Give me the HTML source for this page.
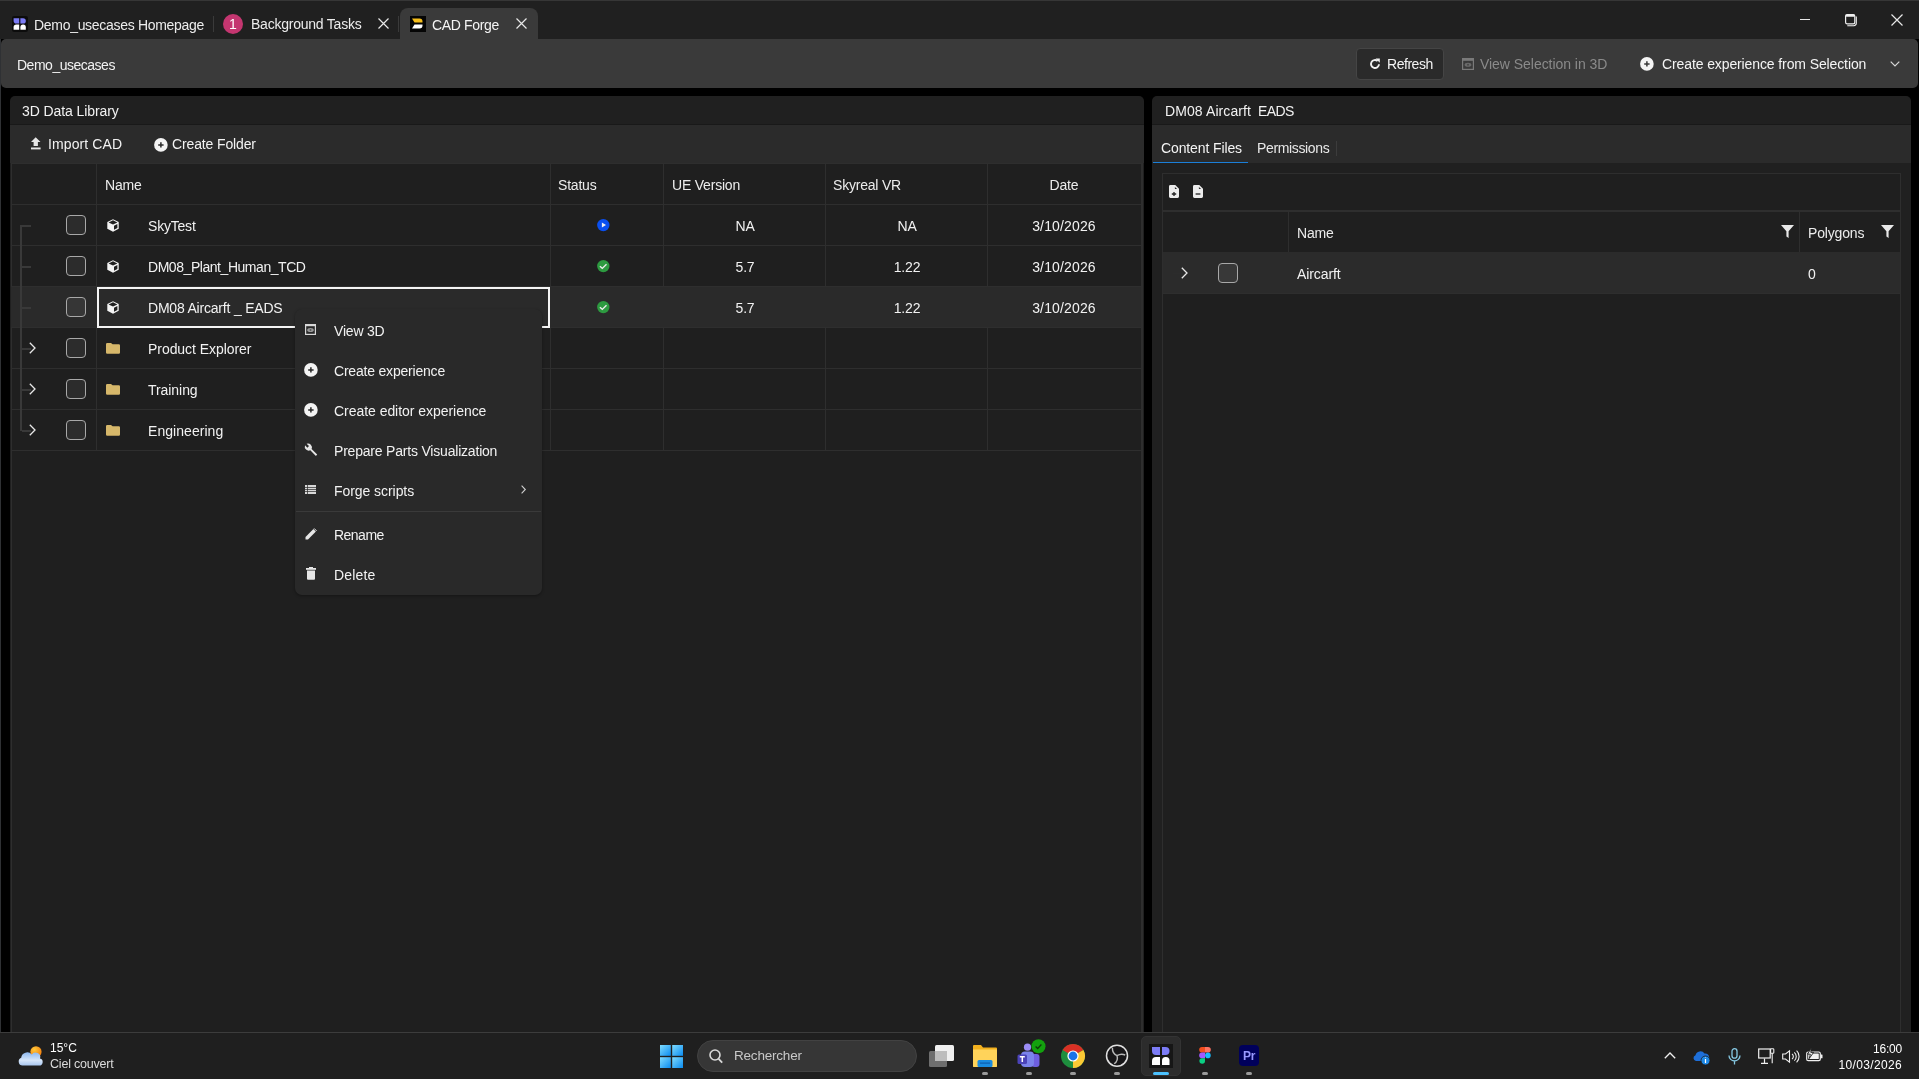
<!DOCTYPE html>
<html><head><meta charset="utf-8">
<style>
*{margin:0;padding:0;box-sizing:border-box}
html,body{width:1919px;height:1079px;overflow:hidden;background:#000}
body{position:relative;font-family:"Liberation Sans",sans-serif;font-size:14px;letter-spacing:-0.2px;color:#f2f2f2}
.a{position:absolute}
.t{position:absolute;line-height:16px;white-space:nowrap;will-change:transform}
svg{position:absolute;overflow:visible}
</style></head><body>

<!-- TITLE BAR -->
<div class="a" style="left:0;top:0;width:1919px;height:39px;background:#202020;border-top:1px solid #363636"></div>
<!-- tab 1 -->
<div class="a" style="left:12px;top:16px;width:16px;height:16px;background:#0c0c0c;border-radius:2px"></div>
<svg style="left:12px;top:16px" width="16" height="16" viewBox="0 0 16 16">
 <path d="M1.6 2.3h5.6v5.2H4.4A2.8 2.8 0 0 1 1.6 4.7z" fill="#7b7bf5"/>
 <path d="M8.4 2.3h2.8A2.6 2.6 0 0 1 13.8 4.9v0A2.6 2.6 0 0 1 11.2 7.5H8.4z" fill="#7b7bf5"/>
 <path d="M1.6 13.8V11.4A2.8 2.8 0 0 1 4.4 8.6H7.2V13.8z" fill="#fff"/>
 <path d="M8.4 13.8V11.2A2.6 2.6 0 0 1 11 8.6h0.2A2.6 2.6 0 0 1 13.8 11.2V13.8z" fill="#fff"/>
</svg>
<div class="t" style="left:34px;top:17px;color:#ececec;letter-spacing:-0.30px">Demo_usecases Homepage</div>
<div class="a" style="left:213px;top:16px;width:1px;height:16px;background:#3a3a3a"></div>
<!-- tab 2 -->
<div class="a" style="left:223px;top:14px;width:20px;height:20px;border-radius:50%;background:#c43670"></div>
<div class="t" style="left:223px;top:16px;width:20px;text-align:center;font-size:14px;color:#fff;letter-spacing:0">1</div>
<div class="t" style="left:251px;top:16px;color:#ececec;letter-spacing:-0.23px">Background Tasks</div>
<svg style="left:378px;top:18px" width="11" height="11" viewBox="0 0 11 11"><path d="M0.5 0.5L10.5 10.5M10.5 0.5L0.5 10.5" stroke="#e8e8e8" stroke-width="1.2"/></svg>
<div class="a" style="left:398px;top:16px;width:1px;height:16px;background:#3a3a3a"></div>
<!-- active tab -->
<div class="a" style="left:400px;top:8px;width:138px;height:32px;background:#3a3a3a;border-radius:8px 8px 0 0"></div>
<div class="a" style="left:410px;top:16px;width:16px;height:16px;background:#050505"></div>
<svg style="left:410px;top:16px" width="16" height="16" viewBox="0 0 16 16">
 <path d="M2 2.5h7.5a3 3 0 0 1 3 3v1H4.5z" fill="#f6be1a"/>
 <path d="M4.5 8.5h8v1a3 3 0 0 1 -3 3H2z" fill="#fff"/>
</svg>
<div class="t" style="left:432px;top:17px;color:#f4f4f4;letter-spacing:-0.34px">CAD Forge</div>
<svg style="left:516px;top:18px" width="11" height="11" viewBox="0 0 11 11"><path d="M0.5 0.5L10.5 10.5M10.5 0.5L0.5 10.5" stroke="#e8e8e8" stroke-width="1.2"/></svg>
<!-- window controls -->
<div class="a" style="left:1800px;top:19px;width:10px;height:1px;background:#e8e8e8"></div>
<svg style="left:1845px;top:14px" width="12" height="12" viewBox="0 0 12 12"><rect x="0.6" y="0.6" width="9.2" height="9.2" rx="1.6" fill="none" stroke="#f0f0f0" stroke-width="1.2"/><rect x="0.6" y="0.6" width="9.2" height="2.2" rx="1" fill="#f0f0f0"/><path d="M11.3 2.5v6.6a2.6 2.6 0 0 1 -2.6 2.6h-6.4" fill="none" stroke="#f0f0f0" stroke-width="1.1"/></svg>
<svg style="left:1891px;top:14px" width="12" height="12" viewBox="0 0 12 12"><path d="M0.5 0.5L11.5 11.5M11.5 0.5L0.5 11.5" stroke="#e8e8e8" stroke-width="1.2"/></svg>

<!-- TOOLBAR -->
<div class="a" style="left:0;top:39px;width:1px;height:993px;background:#2f3134"></div>
<div class="a" style="left:1px;top:39px;width:1917px;height:49px;background:#3a3a3a;border-radius:5px"></div>
<div class="t" style="left:17px;top:57px;color:#f2f2f2;letter-spacing:-0.49px">Demo_usecases</div>

<!-- toolbar right -->
<div class="a" style="left:1356px;top:48px;width:88px;height:32px;background:#2a2a2a;border:1px solid #454545;border-radius:4px"></div>
<svg style="left:1369px;top:58px" width="12" height="12" viewBox="0 0 12 12"><path d="M10 6.2A4 4 0 1 1 8.6 3" fill="none" stroke="#f0f0f0" stroke-width="1.9"/><path d="M6.6 0.6h4.2v4.2z" fill="#f0f0f0"/></svg>
<div class="t" style="left:1387px;top:56px;color:#f4f4f4;letter-spacing:-0.47px">Refresh</div>
<svg style="left:1462px;top:58px" width="12" height="12" viewBox="0 0 12 12"><rect x="0.6" y="0.6" width="10.8" height="10.8" fill="none" stroke="#7a7a7a" stroke-width="1.2"/><rect x="0.6" y="0.6" width="10.8" height="2.2" fill="#7a7a7a"/><ellipse cx="6" cy="6.8" rx="3.4" ry="2" fill="#6a6a6a"/><circle cx="6" cy="6.8" r="1" fill="#484848"/></svg>
<div class="t" style="left:1480px;top:56px;color:#8a8a8a;letter-spacing:-0.04px">View Selection in 3D</div>
<svg style="left:1640px;top:56.5px" width="14" height="14" viewBox="0 0 14 14"><circle cx="6.9" cy="6.9" r="6.8" fill="#f4f4f4"/><path d="M6.9 4.2v5.4M4.2 6.9h5.4" stroke="#383838" stroke-width="1.5"/></svg>
<div class="t" style="left:1662px;top:56px;color:#f4f4f4;letter-spacing:-0.11px">Create experience from Selection</div>
<svg style="left:1890px;top:61px" width="10" height="6" viewBox="0 0 10 6"><path d="M0.7 0.7L5 5L9.3 0.7" fill="none" stroke="#d8d8d8" stroke-width="1.2"/></svg>

<!-- LEFT PANEL -->
<div class="a" style="left:10px;top:96px;width:1134px;height:936px;background:#202020;border-radius:5px 5px 0 0"></div>
<div class="t" style="left:22px;top:103px;letter-spacing:-0.09px">3D Data Library</div>
<div class="a" style="left:10px;top:124px;width:1134px;height:1px;background:#191919"></div><div class="a" style="left:10px;top:125px;width:1134px;height:38px;background:#2b2b2b"></div>

<!-- left toolbar -->
<svg style="left:31px;top:137px" width="10" height="13" viewBox="0 0 10 13"><path d="M4.7 0.3L9.5 5H6.9V9H2.6V5H0z" fill="#e6e6e6"/><rect x="0" y="10.5" width="9.6" height="1.9" fill="#e6e6e6"/></svg>
<div class="t" style="left:48px;top:136px;letter-spacing:0.11px">Import CAD</div>
<svg style="left:154px;top:138px" width="14" height="14" viewBox="0 0 14 14"><circle cx="6.9" cy="6.9" r="6.8" fill="#f4f4f4"/><path d="M6.9 4.2v5.4M4.2 6.9h5.4" stroke="#2b2b2b" stroke-width="1.5"/></svg>
<div class="t" style="left:172px;top:136px;letter-spacing:-0.13px">Create Folder</div>
<!-- TABLE -->
<div class="a" style="left:11px;top:163px;width:1130px;height:869px;background:#1f1f1f;border-left:1px solid #2e2e2e;border-top:1px solid #2e2e2e"></div>
<div class="a" style="left:11px;top:204px;width:1130px;height:1px;background:#2e2e2e"></div>
<div class="a" style="left:11px;top:245px;width:1130px;height:1px;background:#2e2e2e"></div>
<div class="a" style="left:11px;top:286px;width:1130px;height:1px;background:#2e2e2e"></div>
<div class="a" style="left:11px;top:327px;width:1130px;height:1px;background:#2e2e2e"></div>
<div class="a" style="left:11px;top:368px;width:1130px;height:1px;background:#2e2e2e"></div>
<div class="a" style="left:11px;top:409px;width:1130px;height:1px;background:#2e2e2e"></div>
<div class="a" style="left:11px;top:450px;width:1130px;height:1px;background:#2e2e2e"></div>
<div class="a" style="left:96px;top:163px;width:1px;height:288px;background:#2e2e2e"></div>
<div class="a" style="left:550px;top:163px;width:1px;height:288px;background:#2e2e2e"></div>
<div class="a" style="left:663px;top:163px;width:1px;height:288px;background:#2e2e2e"></div>
<div class="a" style="left:825px;top:163px;width:1px;height:288px;background:#2e2e2e"></div>
<div class="a" style="left:987px;top:163px;width:1px;height:288px;background:#2e2e2e"></div>
<div class="a" style="left:1141px;top:163px;width:2px;height:869px;background:#2e2e2e"></div>
<div class="a" style="left:11px;top:287px;width:1130px;height:40px;background:#2a2a2a"></div>
<div class="t" style="left:105px;top:177px;color:#ececec">Name</div>
<div class="t" style="left:558px;top:177px;color:#ececec">Status</div>
<div class="t" style="left:672px;top:177px;color:#ececec">UE Version</div>
<div class="t" style="left:833px;top:177px;color:#ececec">Skyreal VR</div>
<div class="t" style="left:987px;top:177px;width:154px;text-align:center;color:#ececec">Date</div>
<div class="a" style="left:20px;top:225px;width:2px;height:206px;background:#393939"></div>
<div class="a" style="left:22px;top:225px;width:9px;height:2px;background:#393939"></div>
<div class="a" style="left:66px;top:215px;width:20px;height:20px;border:1px solid #a8a8a8;border-radius:4px;background:#2c2c2c"></div>
<svg style="left:107px;top:219px" width="12" height="13" viewBox="0 0 12 13"><path d="M6 0.3L11.7 3.1V9.7L6 12.7L0.3 9.7V3.1z" fill="#f4f4f4"/><path d="M1.6 3.4L6 1.3L10.4 3.4L6 5.5z" fill="#1f1f1f"/><path d="M7 6.7L10.4 5V9L7 10.8z" fill="#1f1f1f"/></svg>
<div class="t" style="left:148px;top:218px">SkyTest</div>
<svg style="left:597px;top:219px" width="13" height="13" viewBox="0 0 13 13"><circle cx="6.3" cy="6.1" r="6.2" fill="#0a4ff0"/><path d="M4.9 3.6L9 6.1L4.9 8.6z" fill="#f0f0f0"/></svg>
<div class="t" style="left:664px;top:218px;width:162px;text-align:center">NA</div>
<div class="t" style="left:826px;top:218px;width:162px;text-align:center">NA</div>
<div class="t" style="left:987px;top:218px;width:154px;text-align:center;letter-spacing:0.15px">3/10/2026</div>
<div class="a" style="left:22px;top:266px;width:9px;height:2px;background:#393939"></div>
<div class="a" style="left:66px;top:256px;width:20px;height:20px;border:1px solid #a8a8a8;border-radius:4px;background:#2c2c2c"></div>
<svg style="left:107px;top:260px" width="12" height="13" viewBox="0 0 12 13"><path d="M6 0.3L11.7 3.1V9.7L6 12.7L0.3 9.7V3.1z" fill="#f4f4f4"/><path d="M1.6 3.4L6 1.3L10.4 3.4L6 5.5z" fill="#1f1f1f"/><path d="M7 6.7L10.4 5V9L7 10.8z" fill="#1f1f1f"/></svg>
<div class="t" style="left:148px;top:259px;letter-spacing:-0.45px">DM08_Plant_Human_TCD</div>
<svg style="left:597px;top:260px" width="13" height="13" viewBox="0 0 13 13"><circle cx="6.3" cy="6.1" r="6.2" fill="#2d9a40"/><path d="M2.9 6.3L5.3 8.4L9.5 4.3" fill="none" stroke="#ececec" stroke-width="1.4"/></svg>
<div class="t" style="left:664px;top:259px;width:162px;text-align:center">5.7</div>
<div class="t" style="left:826px;top:259px;width:162px;text-align:center">1.22</div>
<div class="t" style="left:987px;top:259px;width:154px;text-align:center;letter-spacing:0.15px">3/10/2026</div>
<div class="a" style="left:22px;top:307px;width:9px;height:2px;background:#393939"></div>
<div class="a" style="left:66px;top:297px;width:20px;height:20px;border:1px solid #a8a8a8;border-radius:4px;background:#363636"></div>
<svg style="left:107px;top:301px" width="12" height="13" viewBox="0 0 12 13"><path d="M6 0.3L11.7 3.1V9.7L6 12.7L0.3 9.7V3.1z" fill="#f4f4f4"/><path d="M1.6 3.4L6 1.3L10.4 3.4L6 5.5z" fill="#1f1f1f"/><path d="M7 6.7L10.4 5V9L7 10.8z" fill="#1f1f1f"/></svg>
<div class="t" style="left:148px;top:300px">DM08 Aircarft _ EADS</div>
<svg style="left:597px;top:301px" width="13" height="13" viewBox="0 0 13 13"><circle cx="6.3" cy="6.1" r="6.2" fill="#2d9a40"/><path d="M2.9 6.3L5.3 8.4L9.5 4.3" fill="none" stroke="#ececec" stroke-width="1.4"/></svg>
<div class="t" style="left:664px;top:300px;width:162px;text-align:center">5.7</div>
<div class="t" style="left:826px;top:300px;width:162px;text-align:center">1.22</div>
<div class="t" style="left:987px;top:300px;width:154px;text-align:center;letter-spacing:0.15px">3/10/2026</div>
<div class="a" style="left:22px;top:348px;width:9px;height:2px;background:#393939"></div>
<svg style="left:29px;top:342px" width="7" height="12" viewBox="0 0 7 12"><path d="M0.8 0.8L6 6L0.8 11.2" fill="none" stroke="#e8e8e8" stroke-width="1.3"/></svg>
<div class="a" style="left:66px;top:338px;width:20px;height:20px;border:1px solid #a8a8a8;border-radius:4px;background:#2c2c2c"></div>
<svg style="left:106px;top:343px" width="14" height="11" viewBox="0 0 14 11"><path d="M0 1.2A1.2 1.2 0 0 1 1.2 0H5L6.6 1.2H12.8A1.2 1.2 0 0 1 14 2.4V9.6A1.2 1.2 0 0 1 12.8 10.8H1.2A1.2 1.2 0 0 1 0 9.6z" fill="#d6b76a"/></svg>
<div class="t" style="left:148px;top:341px;letter-spacing:-0.05px">Product Explorer</div>
<div class="a" style="left:22px;top:389px;width:9px;height:2px;background:#393939"></div>
<svg style="left:29px;top:383px" width="7" height="12" viewBox="0 0 7 12"><path d="M0.8 0.8L6 6L0.8 11.2" fill="none" stroke="#e8e8e8" stroke-width="1.3"/></svg>
<div class="a" style="left:66px;top:379px;width:20px;height:20px;border:1px solid #a8a8a8;border-radius:4px;background:#2c2c2c"></div>
<svg style="left:106px;top:384px" width="14" height="11" viewBox="0 0 14 11"><path d="M0 1.2A1.2 1.2 0 0 1 1.2 0H5L6.6 1.2H12.8A1.2 1.2 0 0 1 14 2.4V9.6A1.2 1.2 0 0 1 12.8 10.8H1.2A1.2 1.2 0 0 1 0 9.6z" fill="#d6b76a"/></svg>
<div class="t" style="left:148px;top:382px;letter-spacing:-0.06px">Training</div>
<div class="a" style="left:22px;top:430px;width:9px;height:2px;background:#393939"></div>
<svg style="left:29px;top:424px" width="7" height="12" viewBox="0 0 7 12"><path d="M0.8 0.8L6 6L0.8 11.2" fill="none" stroke="#e8e8e8" stroke-width="1.3"/></svg>
<div class="a" style="left:66px;top:420px;width:20px;height:20px;border:1px solid #a8a8a8;border-radius:4px;background:#2c2c2c"></div>
<svg style="left:106px;top:425px" width="14" height="11" viewBox="0 0 14 11"><path d="M0 1.2A1.2 1.2 0 0 1 1.2 0H5L6.6 1.2H12.8A1.2 1.2 0 0 1 14 2.4V9.6A1.2 1.2 0 0 1 12.8 10.8H1.2A1.2 1.2 0 0 1 0 9.6z" fill="#d6b76a"/></svg>
<div class="t" style="left:148px;top:423px;letter-spacing:0.05px">Engineering</div>
<div class="a" style="left:97px;top:287px;width:453px;height:41px;border:2px solid #f4f4f4"></div>

<!-- CONTEXT MENU -->
<div class="a" style="left:295px;top:309px;width:247px;height:286px;background:#292929;border-radius:7px;box-shadow:0 1px 3px rgba(0,0,0,0.35)"></div>
<svg style="left:305px;top:324px" width="11" height="11" viewBox="0 0 11 11"><rect x="0.6" y="0.6" width="9.8" height="9.8" fill="none" stroke="#d8d8d8" stroke-width="1.2"/><rect x="0.6" y="0.6" width="9.8" height="1.6" fill="#d8d8d8"/><ellipse cx="5.5" cy="6" rx="3.3" ry="2" fill="#9a9a9a"/><circle cx="5.5" cy="6" r="1" fill="#5a5a5a"/></svg>
<div class="t" style="left:334px;top:323px">View 3D</div>
<svg style="left:304px;top:363px" width="14" height="14" viewBox="0 0 14 14"><circle cx="6.9" cy="6.9" r="6.8" fill="#f4f4f4"/><path d="M6.9 4.2v5.4M4.2 6.9h5.4" stroke="#282828" stroke-width="1.5"/></svg>
<div class="t" style="left:334px;top:363px">Create experience</div>
<svg style="left:304px;top:403px" width="14" height="14" viewBox="0 0 14 14"><circle cx="6.9" cy="6.9" r="6.8" fill="#f4f4f4"/><path d="M6.9 4.2v5.4M4.2 6.9h5.4" stroke="#282828" stroke-width="1.5"/></svg>
<div class="t" style="left:334px;top:403px;letter-spacing:-0.04px">Create editor experience</div>
<svg style="left:304px;top:443px" width="14" height="14" viewBox="0 0 14 14"><path d="M13.2 11.6L7.6 6A4 4 0 0 0 2.6 0.7L5 3.1L3.4 4.7L1 2.3A4 4 0 0 0 6.3 7.3L11.9 12.9z" fill="#e6e6e6"/></svg>
<div class="t" style="left:334px;top:443px">Prepare Parts Visualization</div>
<svg style="left:305px;top:485px" width="11" height="9" viewBox="0 0 11 9"><rect x="0" y="0" width="11" height="9" fill="#d8d8d8"/><path d="M0 2.5H11M0 4.5H11M0 6.5H11M2.5 0V9" stroke="#282828" stroke-width="0.7"/></svg>
<div class="t" style="left:334px;top:483px;letter-spacing:-0.06px">Forge scripts</div>
<svg style="left:521px;top:485px" width="5" height="9" viewBox="0 0 5 9"><path d="M0.6 0.6L4.3 4.5L0.6 8.4" fill="none" stroke="#cfcfcf" stroke-width="1.1"/></svg>
<div class="a" style="left:296px;top:511px;width:245px;height:1px;background:#3a3a3a"></div>
<svg style="left:305px;top:528px" width="12" height="12" viewBox="0 0 12 12"><path d="M0.5 11.5V9L8.4 1.1L10.9 3.6L3 11.5z" fill="#e6e6e6"/><path d="M9.1 0.4L11.6 2.9" stroke="#e6e6e6" stroke-width="1"/></svg>
<div class="t" style="left:334px;top:527px;letter-spacing:-0.52px">Rename</div>
<svg style="left:306px;top:567px" width="10" height="13" viewBox="0 0 10 13"><rect x="0" y="1" width="10" height="1.8" fill="#e6e6e6"/><rect x="3" y="0" width="4" height="1.5" fill="#e6e6e6"/><path d="M1 3.6H9V11.8A1 1 0 0 1 8 12.8H2A1 1 0 0 1 1 11.8z" fill="#e6e6e6"/></svg>
<div class="t" style="left:334px;top:567px;letter-spacing:0.18px">Delete</div>

<!-- RIGHT PANEL -->
<div class="a" style="left:1152px;top:96px;width:759px;height:936px;background:#202020;border-radius:5px 5px 0 0"></div>
<div class="t" style="left:1165px;top:103px;letter-spacing:0.1px">DM08 Aircarft</div><div class="t" style="left:1258px;top:103px;letter-spacing:-0.6px">EADS</div>
<div class="a" style="left:1152px;top:124px;width:759px;height:1px;background:#191919"></div><div class="a" style="left:1152px;top:125px;width:759px;height:38px;background:#2b2b2b"></div>

<!-- right tabs -->
<div class="t" style="left:1161px;top:140px;color:#f4f4f4;letter-spacing:-0.12px">Content Files</div>
<div class="a" style="left:1153px;top:162px;width:95px;height:2px;background:#1b7fd8"></div>
<div class="t" style="left:1257px;top:140px;color:#e8e8e8;letter-spacing:-0.35px">Permissions</div>
<div class="a" style="left:1336px;top:141px;width:1px;height:15px;background:#3c3c3c"></div>
<div class="a" style="left:1152px;top:163px;width:759px;height:869px;background:#202020"></div>
<!-- inner box -->
<div class="a" style="left:1162px;top:173px;width:739px;height:859px;background:#1f1f1f;border:1px solid #2e2e2e;border-bottom:none"></div>
<div class="a" style="left:1163px;top:210px;width:737px;height:2px;background:#2e2e2e"></div>
<svg style="left:1169px;top:185px" width="10" height="13" viewBox="0 0 10 13"><path d="M1.4 0H6.3L10 3.7V11.6A1.4 1.4 0 0 1 8.6 13H1.4A1.4 1.4 0 0 1 0 11.6V1.4A1.4 1.4 0 0 1 1.4 0z" fill="#ececec"/><path d="M5.9 1.9L8.1 4.1H6.6A0.7 0.7 0 0 1 5.9 3.4z" fill="#2a2a2a"/><path d="M5 6.9V11.1M2.8 9H7.2" stroke="#1f1f1f" stroke-width="1.3"/></svg>
<svg style="left:1193px;top:185px" width="10" height="13" viewBox="0 0 10 13"><path d="M1.4 0H6.3L10 3.7V11.6A1.4 1.4 0 0 1 8.6 13H1.4A1.4 1.4 0 0 1 0 11.6V1.4A1.4 1.4 0 0 1 1.4 0z" fill="#ececec"/><path d="M5.9 1.9L8.1 4.1H6.6A0.7 0.7 0 0 1 5.9 3.4z" fill="#2a2a2a"/><path d="M2.6 9H7.4" stroke="#1f1f1f" stroke-width="1.3"/></svg>
<!-- right table header -->
<div class="a" style="left:1288px;top:212px;width:1px;height:40px;background:#2e2e2e"></div>
<div class="a" style="left:1799px;top:212px;width:1px;height:40px;background:#2e2e2e"></div>
<div class="a" style="left:1163px;top:252px;width:737px;height:41px;background:#2b2b2b"></div>
<div class="a" style="left:1163px;top:293px;width:737px;height:1px;background:#2e2e2e"></div>
<div class="t" style="left:1297px;top:225px;color:#ececec">Name</div>
<div class="t" style="left:1808px;top:225px;color:#ececec;letter-spacing:-0.17px">Polygons</div>
<svg style="left:1781px;top:225px" width="13" height="13" viewBox="0 0 13 13"><path d="M0 0H13L7.6 6.2V13L5.4 11.4V6.2z" fill="#e8e8e8"/></svg>
<svg style="left:1881px;top:225px" width="13" height="13" viewBox="0 0 13 13"><path d="M0 0H13L7.6 6.2V13L5.4 11.4V6.2z" fill="#e8e8e8"/></svg>
<div class="a" style="left:1173px;top:273px;width:8px;height:1px;background:#2c2c2c"></div>
<svg style="left:1181px;top:267px" width="7" height="12" viewBox="0 0 7 12"><path d="M0.8 0.8L6 6L0.8 11.2" fill="none" stroke="#e8e8e8" stroke-width="1.3"/></svg>
<div class="a" style="left:1218px;top:263px;width:20px;height:20px;border:1px solid #a8a8a8;border-radius:4px;background:#383838"></div>
<div class="t" style="left:1297px;top:266px;letter-spacing:-0.1px">Aircarft</div>
<div class="t" style="left:1808px;top:266px">0</div>

<!-- TASKBAR -->
<div class="a" style="left:0;top:1032px;width:1919px;height:47px;background:#1f1f1f;border-top:1px solid #3c3c3c"></div>

<!-- weather -->
<svg style="left:18px;top:1045px" width="26" height="22" viewBox="0 0 26 22">
 <defs><linearGradient id="cl" x1="0" y1="0" x2="0" y2="1"><stop offset="0" stop-color="#8db8f0"/><stop offset="0.6" stop-color="#d6e6fa"/><stop offset="1" stop-color="#a9c6ee"/></linearGradient>
 <radialGradient id="sn" cx="0.35" cy="0.3" r="0.8"><stop offset="0" stop-color="#ffc83a"/><stop offset="1" stop-color="#f27a0c"/></radialGradient></defs>
 <circle cx="18" cy="6.8" r="5.6" fill="url(#sn)"/>
 <path d="M4.5 20.5A4 4 0 0 1 3.2 12.8A6 6 0 0 1 13.8 9.6A4.6 4.6 0 0 1 22 13.6A3.5 3.5 0 0 1 21.2 20.5z" fill="url(#cl)"/>
</svg>
<div class="t" style="left:50px;top:1041px;font-size:12px;line-height:14px;color:#fff;letter-spacing:0px">15°C</div>
<div class="t" style="left:50px;top:1057px;font-size:12.5px;line-height:14px;color:#dcdcdc">Ciel couvert</div>
<!-- start -->
<svg style="left:660px;top:1045px" width="23" height="23" viewBox="0 0 23 23">
 <defs><linearGradient id="wn" x1="0" y1="0" x2="1" y2="1"><stop offset="0" stop-color="#7fdcff"/><stop offset="1" stop-color="#0a8bf0"/></linearGradient></defs>
 <rect x="0" y="0" width="10.8" height="10.8" fill="url(#wn)"/><rect x="12.2" y="0" width="10.8" height="10.8" fill="url(#wn)"/>
 <rect x="0" y="12.2" width="10.8" height="10.8" fill="url(#wn)"/><rect x="12.2" y="12.2" width="10.8" height="10.8" fill="url(#wn)"/>
</svg>
<!-- search -->
<div class="a" style="left:697px;top:1040px;width:220px;height:32px;border-radius:16px;background:#363636;border:1px solid #424242"></div>
<svg style="left:709px;top:1049px" width="14" height="15" viewBox="0 0 14 15"><circle cx="6" cy="6" r="5" fill="none" stroke="#d8d8d8" stroke-width="1.6"/><path d="M9.6 9.8L13.2 13.6" stroke="#d8d8d8" stroke-width="1.8"/></svg>
<div class="t" style="left:734px;top:1048px;font-size:13.5px;color:#c8c8c8">Rechercher</div>
<!-- task view -->
<svg style="left:929px;top:1045px" width="25" height="22" viewBox="0 0 25 22"><rect x="0" y="6" width="18" height="16" rx="1.5" fill="#6e6e6e"/><rect x="6" y="0" width="19" height="16" rx="1.5" fill="#f0f0f0"/><rect x="6" y="6" width="12" height="10" fill="#bdbdbd"/></svg>
<!-- explorer -->
<svg style="left:973px;top:1045px" width="24" height="22" viewBox="0 0 24 22"><path d="M0 1A1 1 0 0 1 1 0H8L10 2.5H23A1 1 0 0 1 24 3.5V21A1 1 0 0 1 23 22H1A1 1 0 0 1 0 21z" fill="#f2b01e"/><path d="M0 4.5H24V21A1 1 0 0 1 23 22H1A1 1 0 0 1 0 21z" fill="#ffd35a"/><rect x="4.5" y="15" width="15" height="7" rx="1.5" fill="#1a8be0"/><rect x="7" y="17.5" width="10" height="1.2" fill="#0d5fae"/></svg>
<div class="a" style="left:982px;top:1072px;width:6px;height:3px;border-radius:2px;background:#9a9a9a"></div>
<!-- teams -->
<svg style="left:1017px;top:1039px" width="30" height="29" viewBox="0 0 30 29">
 <circle cx="10.5" cy="8.2" r="3.6" fill="#9b8cf5"/>
 <rect x="14.5" y="15" width="8" height="13" rx="3" fill="#6f5fe0"/>
 <rect x="4" y="12.5" width="13" height="15.5" rx="4" fill="#7b83eb"/>
 <rect x="0.5" y="15.5" width="9.5" height="9.5" rx="1.5" fill="#4b43b8"/>
 <path d="M2.8 17.8H7.8M5.3 17.8V23" stroke="#fff" stroke-width="1.5"/>
 <circle cx="21.5" cy="7.2" r="7" fill="#13a10e"/>
 <path d="M18.6 7.5L20.7 9.5L24.4 5.5" fill="none" stroke="#0b3d08" stroke-width="1.3"/>
</svg>
<div class="a" style="left:1026px;top:1072px;width:6px;height:3px;border-radius:2px;background:#9a9a9a"></div>
<!-- chrome -->
<svg style="left:1061px;top:1044px" width="24" height="24" viewBox="0 0 24 24">
 <circle cx="12" cy="12" r="12" fill="#1e8e3e"/>
 <path d="M12 12L1.6 6A12 12 0 0 1 22.4 6z" fill="#d93025"/>
 <path d="M12 12L22.4 6A12 12 0 0 1 12 24z" fill="#fcc934"/>
 <circle cx="12" cy="12" r="5.6" fill="#fff"/><circle cx="12" cy="12" r="4.4" fill="#1a73e8"/>
</svg>
<div class="a" style="left:1070px;top:1072px;width:6px;height:3px;border-radius:2px;background:#9a9a9a"></div>
<!-- obs -->
<svg style="left:1105px;top:1044px" width="24" height="24" viewBox="0 0 24 24">
 <circle cx="12" cy="11.7" r="10.5" fill="#171618" stroke="#e0e0e0" stroke-width="1.5"/>
 <path d="M7.4 3.8Q7.2 9.6 12 11.7" fill="none" stroke="#b8b8b8" stroke-width="1.4"/>
 <path d="M12 11.7Q13.6 16.6 9.2 19.8" fill="none" stroke="#b8b8b8" stroke-width="1.4"/>
 <path d="M12 11.7Q16 9.2 20.2 11" fill="none" stroke="#b8b8b8" stroke-width="1.4"/>
</svg>
<div class="a" style="left:1114px;top:1072px;width:6px;height:3px;border-radius:2px;background:#9a9a9a"></div>
<!-- active -->
<div class="a" style="left:1141px;top:1036px;width:40px;height:40px;border-radius:5px;background:#2c2c2c;border:1px solid #333"></div>
<div class="a" style="left:1149px;top:1044px;width:24px;height:24px;background:#161616"></div>
<svg style="left:1149px;top:1044px" width="24" height="24" viewBox="0 0 24 24">
 <path d="M3 3h8v8H7A4 4 0 0 1 3 7z" fill="#7b7bf5"/>
 <path d="M13 3h3.5A4 4 0 0 1 20.5 7v0A4 4 0 0 1 16.5 11H13z" fill="#7b7bf5"/>
 <path d="M3 21V17A4 4 0 0 1 7 13H11V21z" fill="#fff"/>
 <path d="M13 21V16.5A3.5 3.5 0 0 1 16.5 13h0.5A3.5 3.5 0 0 1 20.5 16.5V21z" fill="#fff"/>
</svg>
<div class="a" style="left:1153px;top:1072px;width:16px;height:3px;border-radius:2px;background:#4cc2ff"></div>
<!-- figma -->
<svg style="left:1199px;top:1047px" width="12" height="17" viewBox="0 0 12 17">
 <path d="M3 0H6V5.6H3A2.8 2.8 0 0 1 3 0z" fill="#f24e1e"/>
 <path d="M6 0H9A2.8 2.8 0 0 1 9 5.6H6z" fill="#ff7262"/>
 <path d="M3 5.6H6V11.2H3A2.8 2.8 0 0 1 3 5.6z" fill="#a259ff"/>
 <circle cx="8.9" cy="8.4" r="2.8" fill="#1abcfe"/>
 <path d="M3 11.2H6V14A2.8 2.8 0 1 1 3 11.2z" fill="#0acf83"/>
</svg>
<div class="a" style="left:1202px;top:1072px;width:6px;height:3px;border-radius:2px;background:#9a9a9a"></div>
<!-- premiere -->
<div class="a" style="left:1239px;top:1045px;width:20px;height:21px;border-radius:4px;background:#00005b"></div>
<div class="t" style="left:1239px;top:1048px;width:20px;text-align:center;font-size:12px;font-weight:bold;color:#9999ff;letter-spacing:-0.3px">Pr</div>
<div class="a" style="left:1246px;top:1072px;width:6px;height:3px;border-radius:2px;background:#9a9a9a"></div>
<!-- tray -->
<svg style="left:1664px;top:1052px" width="12" height="7" viewBox="0 0 12 7"><path d="M0.8 6.2L6 1L11.2 6.2" fill="none" stroke="#f0f0f0" stroke-width="1.3"/></svg>
<svg style="left:1693px;top:1048px" width="19" height="18" viewBox="0 0 19 18"><path d="M3 13A3 3 0 0 1 2.5 7.2A5 5 0 0 1 11.5 5.5A3.8 3.8 0 0 1 16 10A2.8 2.8 0 0 1 15 13z" fill="#1e6fd9"/><circle cx="12.5" cy="12.5" r="4.5" fill="#1e88e5" stroke="#1c1c1c" stroke-width="0.8"/><path d="M12.5 11V15M12.5 9.5V10" stroke="#fff" stroke-width="1.2"/></svg>
<svg style="left:1728px;top:1048px" width="13" height="17" viewBox="0 0 13 17"><rect x="4" y="0.7" width="5" height="9.5" rx="2.5" fill="none" stroke="#86c9e3" stroke-width="1.3"/><path d="M1 7.5A5.5 5.5 0 0 0 12 7.5M6.5 13V16.5" fill="none" stroke="#86c9e3" stroke-width="1.3"/></svg>
<svg style="left:1758px;top:1048px" width="17" height="16" viewBox="0 0 17 16"><rect x="0.7" y="1" width="11.5" height="9" fill="none" stroke="#f0f0f0" stroke-width="1.2"/><path d="M3 15.3H10M6.5 10.5V15.3" stroke="#f0f0f0" stroke-width="1.2"/><rect x="12.6" y="0.7" width="3.2" height="4.5" rx="0.8" fill="none" stroke="#f0f0f0" stroke-width="1.1"/><path d="M14.2 5.2V15.3" stroke="#f0f0f0" stroke-width="1.1"/></svg>
<svg style="left:1782px;top:1050px" width="17" height="13" viewBox="0 0 17 13"><path d="M0.7 4H3.5L7.5 0.8V12.2L3.5 9H0.7z" fill="none" stroke="#f0f0f0" stroke-width="1.1"/><path d="M10 4A3 3 0 0 1 10 9M12.3 2.3A5.5 5.5 0 0 1 12.3 10.7M14.6 0.7A8 8 0 0 1 14.6 12.3" fill="none" stroke="#f0f0f0" stroke-width="1.1"/></svg>
<svg style="left:1806px;top:1048px" width="17" height="14" viewBox="0 0 17 14"><rect x="0.7" y="4" width="13.6" height="8.6" rx="1.6" fill="none" stroke="#f0f0f0" stroke-width="1.2"/><rect x="2.2" y="5.5" width="10.6" height="5.6" rx="0.6" fill="#f0f0f0"/><rect x="14.6" y="6.4" width="1.9" height="3.8" rx="0.5" fill="#f0f0f0"/><path d="M5.2 0L1.6 6.2H4.4L3.2 10.6L7.6 4.4H4.8z" fill="#f0f0f0" stroke="#1f1f1f" stroke-width="0.9"/></svg>
<div class="t" style="left:1820px;top:1042px;width:82px;text-align:right;font-size:12px;line-height:14px;color:#fff">16:00</div>
<div class="t" style="left:1820px;top:1058px;width:82px;text-align:right;font-size:12px;line-height:14px;color:#fff;letter-spacing:0.35px">10/03/2026</div>

</body></html>
